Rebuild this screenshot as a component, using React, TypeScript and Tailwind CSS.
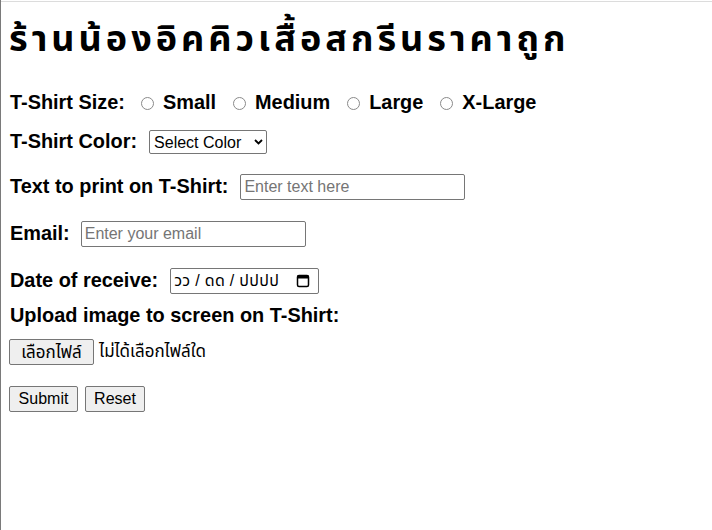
import { useState } from "react";

const sizes = ["Small", "Medium", "Large", "X-Large"];

const fieldBox =
  "h-[26px] border border-[#767676] rounded-[2px] bg-white px-[3px] text-[16px] text-black outline-none placeholder:text-[#757575]";

const btn =
  "h-[26px] px-[6px] border border-[#767676] rounded-[2px] bg-[#efefef] text-[16px] text-black leading-none";

const App = () => {
  const [size, setSize] = useState("");

  return (
    <div className="min-h-screen bg-white border-l border-l-[#7a7a7a] pt-px font-['Liberation_Sans','Noto_Sans_Thai','Noto_Sans',sans-serif] text-black">
      <div className="border-t border-t-[#dcdcdc] pl-2 pt-[15px]">
        <h1 className="h-[44px] leading-[44px] text-[36px] tracking-[4px] font-bold">
          ร้านน้องอิคคิวเสื้อสกรีนราคาถูก
        </h1>

        <form className="flex flex-col items-start" onSubmit={(e) => e.preventDefault()}>
          {/* size */}
          <div className="mt-[30px] h-[24px] flex items-center text-[19.9px] font-bold">
            <span className="pl-[1px]">T-Shirt Size:</span>
            {sizes.map((s, i) => (
              <label key={s} className={`flex items-center ${i === 0 ? "ml-[16px]" : "ml-[17px]"}`}>
                <input
                  type="radio"
                  name="size"
                  checked={size === s}
                  onChange={() => setSize(s)}
                  className="appearance-none w-[13px] h-[13px] rounded-full border border-[#8a8a8a] bg-white checked:border-[4px] checked:border-[#0075ff]"
                />
                <span className="ml-[9px]">{s}</span>
              </label>
            ))}
          </div>

          {/* color */}
          <div className="mt-[15px] h-[24px] flex items-center">
            <span className="pl-[1px] text-[19.9px] font-bold">T-Shirt Color:</span>
            <div className="relative ml-[12px]">
              <select className="appearance-none w-[118px] h-[24px] border border-[#767676] rounded-[2px] bg-white pl-[4px] text-[16px] text-black outline-none">
                <option>Select Color</option>
                <option>White</option>
                <option>Black</option>
                <option>Red</option>
              </select>
              <svg
                className="absolute right-[4px] top-[9px] pointer-events-none"
                width="9"
                height="6"
                viewBox="0 0 9 6"
              >
                <path d="M1 1l3.5 3.5L8 1" fill="none" stroke="#000" strokeWidth="1.8" />
              </svg>
            </div>
          </div>

          {/* text */}
          <div className="mt-[20px] h-[26px] flex items-center">
            <span className="pl-[1px] text-[19.9px] font-bold">Text to print on T-Shirt:</span>
            <input type="text" placeholder="Enter text here" className={`ml-[12px] w-[225px] ${fieldBox}`} />
          </div>

          {/* email */}
          <div className="mt-[21px] h-[26px] flex items-center">
            <span className="pl-[1px] text-[19.9px] font-bold">Email:</span>
            <input type="email" placeholder="Enter your email" className={`ml-[11px] w-[225px] ${fieldBox}`} />
          </div>

          {/* date */}
          <div className="mt-[21px] h-[26px] flex items-center">
            <span className="pl-[1px] text-[19.9px] font-bold">Date of receive:</span>
            <div className={`ml-[12px] w-[149px] flex items-center justify-between ${fieldBox}`}>
              <span className="text-[16px] tracking-[0.3px]">วว / ดด / ปปปป</span>
              <svg width="14" height="14" viewBox="0 0 14 14" className="mr-[5px]">
                <rect x="1.5" y="1.5" width="11" height="11" rx="1.5" fill="none" stroke="#000" strokeWidth="1.5" />
                <rect x="1.5" y="1.5" width="11" height="3" fill="#000" />
              </svg>
            </div>
          </div>

          {/* upload */}
          <div className="mt-[11px] h-[22px] flex items-center text-[19.9px] font-bold">
            <span className="pl-[1px]">Upload image to screen on T-Shirt:</span>
          </div>

          <div className="mt-[12px] h-[26px] flex items-center">
            <button type="button" className={`${btn} w-[85px] text-[17px]`}>
              เลือกไฟล์
            </button>
            <span className="ml-[5px] text-[17px]">ไม่ได้เลือกไฟล์ใด</span>
          </div>

          <div className="mt-[21px] flex items-center gap-[7px]">
            <button type="submit" className={`${btn} w-[69px]`}>
              Submit
            </button>
            <button type="reset" className={`${btn} w-[60px]`}>
              Reset
            </button>
          </div>
        </form>
      </div>
    </div>
  );
};

export default App;
